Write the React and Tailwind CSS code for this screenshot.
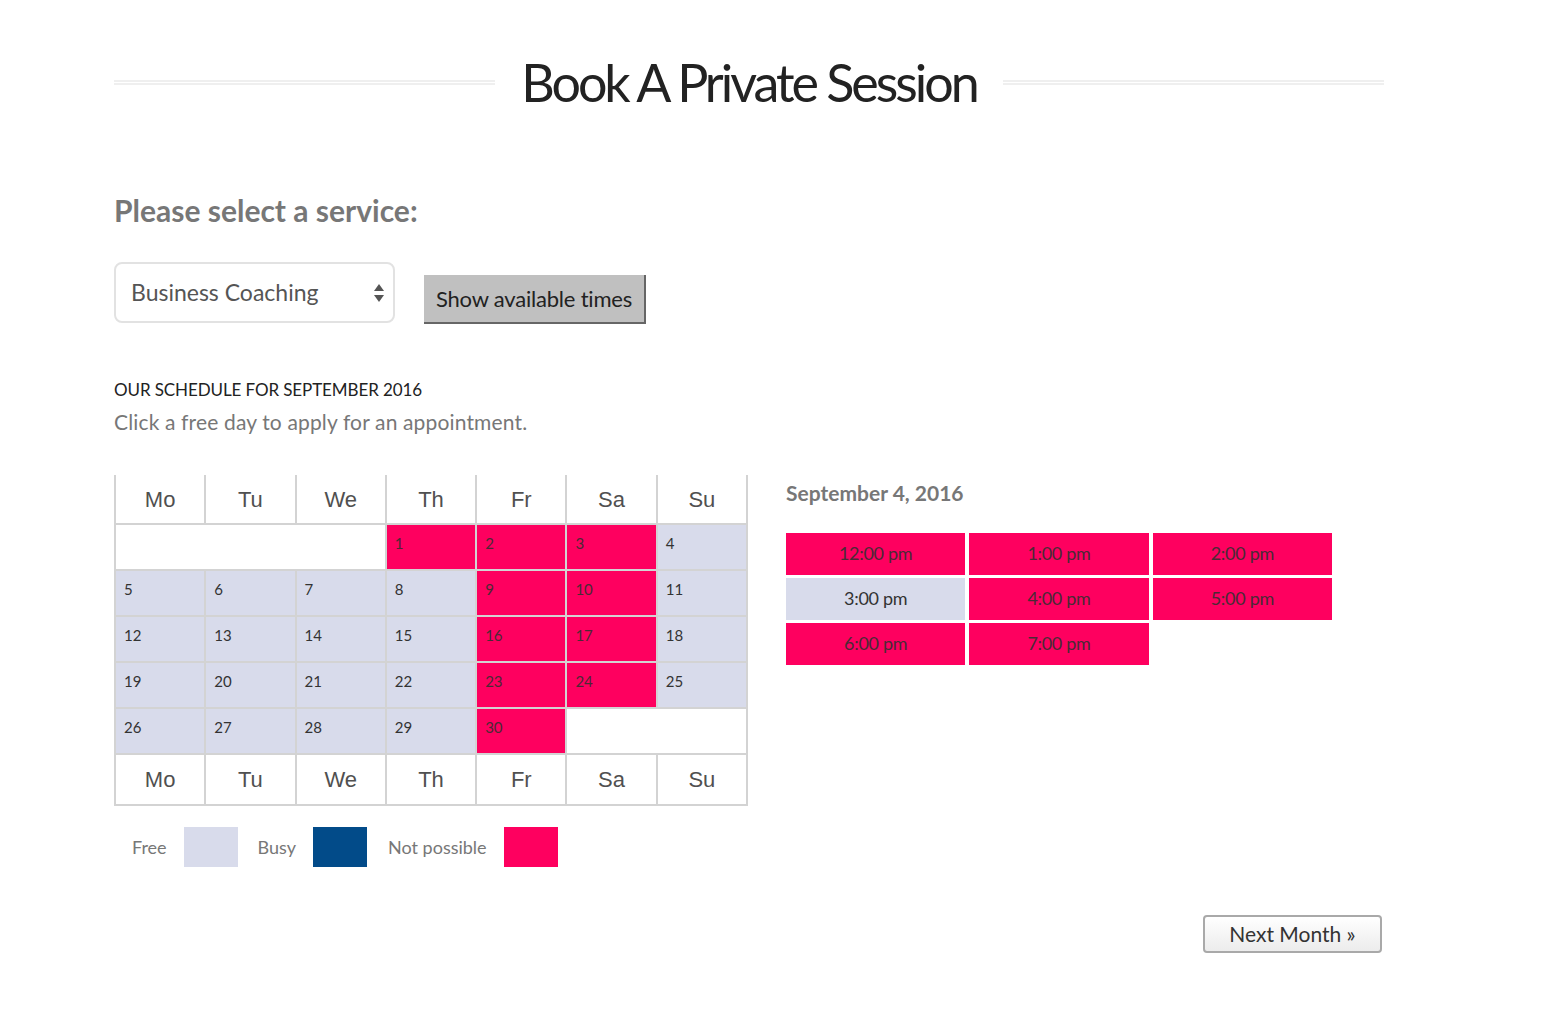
import React from "react";

const FREE = "bg-[#d8dbeb]";
const NOPE = "bg-[#fe005f]";
const days = ["Mo", "Tu", "We", "Th", "Fr", "Sa", "Su"];

// status per day of month: f = free, n = not possible
const weeks = [
  [null, null, null, [1, "n"], [2, "n"], [3, "n"], [4, "f"]],
  [[5, "f"], [6, "f"], [7, "f"], [8, "f"], [9, "n"], [10, "n"], [11, "f"]],
  [[12, "f"], [13, "f"], [14, "f"], [15, "f"], [16, "n"], [17, "n"], [18, "f"]],
  [[19, "f"], [20, "f"], [21, "f"], [22, "f"], [23, "n"], [24, "n"], [25, "f"]],
  [[26, "f"], [27, "f"], [28, "f"], [29, "f"], [30, "n"], null, null],
];

const slots = [
  ["12:00 pm", "n"], ["1:00 pm", "n"], ["2:00 pm", "n"],
  ["3:00 pm", "f"], ["4:00 pm", "n"], ["5:00 pm", "n"],
  ["6:00 pm", "n"], ["7:00 pm", "n"],
];

function HeadRow({ top }) {
  return (
    <tr>
      {days.map((d) => (
        <td
          key={d}
          className={`border-2 border-[#d3d3d3] text-center text-[22px] text-[#505050] font-['Liberation_Sans',Arial,sans-serif] ${top ? "h-[49px] border-t-0" : "h-[51px]"}`}
        >
          {d}
        </td>
      ))}
    </tr>
  );
}

function Week({ cells }) {
  const out = [];
  let i = 0;
  while (i < cells.length) {
    if (cells[i] === null) {
      let span = 0;
      while (i < cells.length && cells[i] === null) {
        span++;
        i++;
      }
      out.push(<td key={"e" + i} colSpan={span} className="h-[46px] border-2 border-[#d3d3d3] bg-white" />);
    } else {
      const [n, s] = cells[i];
      out.push(
        <td
          key={n}
          className={`h-[46px] border-2 border-[#d3d3d3] align-top pl-[8px] pt-[7px] text-[15px] ${s === "n" ? NOPE + " text-[#4a2a35]" : FREE + " text-[#333]"}`}
        >
          {n}
        </td>
      );
      i++;
    }
  }
  return <tr>{out}</tr>;
}

export default function App() {
  return (
    <div className="min-h-[1032px] bg-white font-['Lato','Open_Sans',sans-serif] text-[#333]">
      <div className="ml-[114px] w-[1270px] pt-[50px]">
        <div className="flex items-center gap-[26px]">
          <div className="h-[5px] flex-1 border-y-2 border-[#efefef]" />
          <h1 className="text-[52px] leading-[64px] tracking-[-3px] text-[#222]">Book A Private Session</h1>
          <div className="h-[5px] flex-1 border-y-2 border-[#efefef]" />
        </div>

        <h2 className="mt-[76px] text-[30px] font-bold leading-[40px] tracking-[0px] text-[#777]">
          Please select a service:
        </h2>

        <div className="mt-[32px] flex items-start gap-[29px]">
          <div className="flex h-[61px] w-[281px] items-center justify-between rounded-[8px] border-2 border-[#e2e2e2] pl-[15px] pr-[8px]">
            <span className="text-[23px] text-[#555]">Business Coaching</span>
            <svg width="12" height="24" viewBox="0 0 12 24" className="text-[#555]">
              <path d="M6 3 L11 10 L1 10 Z" fill="currentColor" />
              <path d="M6 21 L11 14 L1 14 Z" fill="currentColor" />
            </svg>
          </div>
          <button className="mt-[13px] h-[49px] w-[222px] border-r-2 border-b-2 border-[#666] bg-[#c0c0c0] text-[22px] tracking-[-0.2px] text-[#222]">
            Show available times
          </button>
        </div>

        <p className="mt-[53px] text-[17px] uppercase tracking-[-0.1px] text-[#222]">Our schedule for September 2016</p>
        <p className="mt-[3px] text-[21px] tracking-[0.15px] text-[#777]">Click a free day to apply for an appointment.</p>

        <div className="mt-[38px] flex items-start gap-[38px]">
          <div>
            <table className="w-[634px] table-fixed border-collapse">
              <tbody>
                <HeadRow top />
                {weeks.map((w, i) => (
                  <Week key={i} cells={w} />
                ))}
                <HeadRow />
              </tbody>
            </table>

            <div className="mt-[21px] flex items-center pl-[18px] text-[18px] text-[#777]">
              <span>Free</span>
              <span className={`ml-[17px] h-[40px] w-[54px] ${FREE}`} />
              <span className="ml-[20px]">Busy</span>
              <span className="ml-[17px] h-[40px] w-[54px] bg-[#024b89]" />
              <span className="ml-[21px]">Not possible</span>
              <span className={`ml-[17px] h-[40px] w-[54px] ${NOPE}`} />
            </div>
          </div>

          <div className="pt-[2px]">
            <p className="text-[21px] font-bold text-[#777]">September 4, 2016</p>
            <div className="mt-[24px] grid w-[546px] grid-cols-3 gap-x-[4px] gap-y-[3px]">
              {slots.map(([t, s]) => (
                <div
                  key={t}
                  className={`flex h-[42px] items-center justify-center text-[18px] tracking-[-0.3px] ${s === "n" ? NOPE + " text-[#4a2a35]" : FREE + " text-[#333]"}`}
                >
                  {t}
                </div>
              ))}
            </div>
          </div>
        </div>

        <div className="mt-[48px] flex justify-end pr-[2px]">
          <button className="h-[38px] w-[179px] rounded-[4px] border-2 border-[#a9a9a9] bg-gradient-to-b from-white to-[#ececec] text-[21px] text-[#333]">
            Next Month »
          </button>
        </div>
      </div>
    </div>
  );
}
